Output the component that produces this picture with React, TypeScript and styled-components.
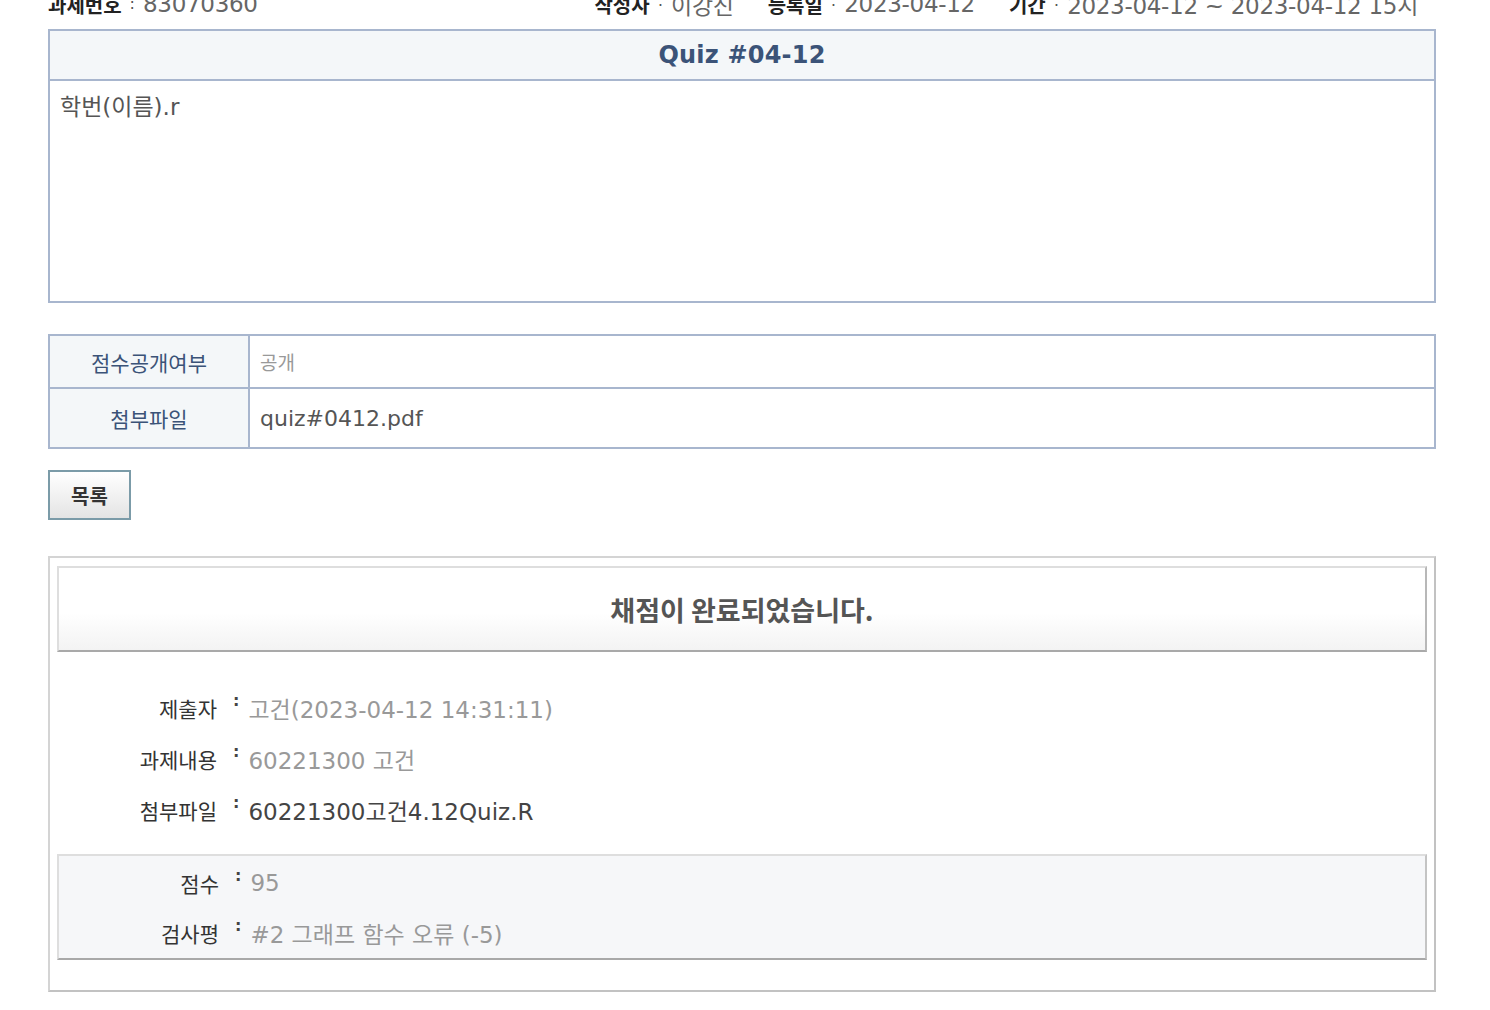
import React from "react";
import styled, { createGlobalStyle } from "styled-components";

const Global = createGlobalStyle`
  html, body { margin: 0; padding: 0; background: #ffffff; }
  body {
    font-family: "DejaVu Sans", "Noto Sans CJK KR", sans-serif;
    color: #333;
    overflow: hidden;
  }
`;

const Page = styled.div`
  width: 1388px;
  margin-left: 48px;
  display: flex;
  flex-direction: column;
`;

const InfoBar = styled.div`
  display: flex;
  justify-content: space-between;
  align-items: center;
  height: 32px;
  margin-top: -12px;
  margin-bottom: 9px;
  padding-right: 18px;
`;

const InfoGroup = styled.div`
  display: flex;
  gap: 34px;
`;

const InfoItem = styled.div`
  display: flex;
  align-items: center;
  white-space: nowrap;
`;

const InfoLabel = styled.span`
  font-family: "Noto Sans CJK KR", sans-serif;
  font-weight: 700;
  font-size: 20px;
  color: #222;
`;

const InfoValue = styled.span`
  font-size: 23px;
  color: #666;
  letter-spacing: -0.3px;
`;

const Colon = styled.span`
  display: inline-block;
  align-self: flex-start;
  font-size: 16px;
  line-height: 1;
  color: #555;
  margin: 6px 8px 0 8px;
`;

const QuizBox = styled.section`
  border: 2px solid #a8b6ce;
  display: flex;
  flex-direction: column;
`;

const QuizHeader = styled.h2`
  margin: 0;
  height: 48px;
  display: flex;
  align-items: center;
  justify-content: center;
  background: #f4f7f9;
  border-bottom: 2px solid #a8b6ce;
  font-size: 24px;
  font-weight: 700;
  color: #3b5378;
  letter-spacing: 0.2px;
`;

const QuizBody = styled.div`
  height: 220px;
  padding: 12px 10px 0;
  box-sizing: border-box;
  font-size: 23px;
  line-height: 28px;
  color: #555;
`;

const InfoTable = styled.div`
  margin-top: 31px;
  display: grid;
  grid-template-columns: 198px 1fr;
  grid-template-rows: 51px 58px;
  gap: 2px;
  padding: 2px;
  background: #a8b6ce;
`;

const HeadCell = styled.div`
  background: #f4f7f9;
  display: flex;
  align-items: center;
  justify-content: center;
  font-family: "Noto Sans CJK KR", sans-serif;
  font-size: 21px;
  color: #3b5378;
`;

const DataCell = styled.div<{ $muted?: boolean }>`
  background: #ffffff;
  display: flex;
  align-items: center;
  padding-left: 10px;
  font-size: ${(p) => (p.$muted ? "19px" : "22px")};
  color: ${(p) => (p.$muted ? "#999" : "#555")};
`;

const ButtonRow = styled.div`
  margin-top: 21px;
  display: flex;
`;

const ListButton = styled.button`
  width: 83px;
  height: 50px;
  border: 2px solid #7b9ba8;
  background: linear-gradient(#ffffff, #e4e4e4);
  font-family: "Noto Sans CJK KR", sans-serif;
  font-size: 20px;
  font-weight: 700;
  color: #333;
  padding: 0;
  cursor: pointer;
`;

const ResultBox = styled.section`
  margin-top: 36px;
  border: 2px solid #d4d4d4;
  border-right-color: #c2c2c2;
  border-bottom-color: #c2c2c2;
  padding: 8px 7px 30px 7px;
  display: flex;
  flex-direction: column;
`;

const ResultHeader = styled.h3`
  margin: 0;
  height: 82px;
  display: flex;
  align-items: center;
  justify-content: center;
  border: 2px solid #dedede;
  border-right-color: #b8b8b8;
  border-bottom-color: #a9a9a9;
  background: linear-gradient(#ffffff 55%, #f3f3f3);
  font-family: "Noto Sans CJK KR", sans-serif;
  font-size: 27px;
  font-weight: 700;
  color: #555;
`;

const Rows = styled.div`
  padding: 30px 0 19px;
  display: flex;
  flex-direction: column;
`;

const Row = styled.div<{ $h?: number }>`
  display: flex;
  align-items: center;
  height: ${(p) => p.$h ?? 51}px;
`;

const RowLabel = styled.div`
  width: 160px;
  text-align: right;
  font-family: "Noto Sans CJK KR", sans-serif;
  font-size: 21px;
  color: #333;
`;

const RowColon = styled(Colon)`
  align-self: center;
  font-weight: 700;
  color: #444;
  margin: -14px 9px 0 16px;
`;

const RowValue = styled.div<{ $dark?: boolean }>`
  font-size: 23px;
  color: ${(p) => (p.$dark ? "#444" : "#999")};
`;

const ScoreBox = styled.div`
  background: #f6f7f9;
  border: 2px solid #dedede;
  border-right-color: #c4c4c4;
  border-bottom-color: #a9a9a9;
  padding-top: 2px;
  display: flex;
  flex-direction: column;
`;

const info = [
  { label: "작성자", value: "이강진" },
  { label: "등록일", value: "2023-04-12" },
  { label: "기간", value: "2023-04-12 ~ 2023-04-12 15시" },
];

const submission = [
  { label: "제출자", value: "고건(2023-04-12 14:31:11)" },
  { label: "과제내용", value: "60221300 고건" },
  { label: "첨부파일", value: "60221300고건4.12Quiz.R", dark: true },
];

const grading = [
  { label: "점수", value: "95" },
  { label: "검사평", value: "#2 그래프 함수 오류 (-5)" },
];

export default function App() {
  return (
    <>
      <Global />
      <Page>
        <InfoBar>
          <InfoItem>
            <InfoLabel>과제번호</InfoLabel>
            <Colon>:</Colon>
            <InfoValue>83070360</InfoValue>
          </InfoItem>
          <InfoGroup>
            {info.map((i) => (
              <InfoItem key={i.label}>
                <InfoLabel>{i.label}</InfoLabel>
                <Colon>:</Colon>
                <InfoValue>{i.value}</InfoValue>
              </InfoItem>
            ))}
          </InfoGroup>
        </InfoBar>

        <QuizBox>
          <QuizHeader>Quiz #04-12</QuizHeader>
          <QuizBody>학번(이름).r</QuizBody>
        </QuizBox>

        <InfoTable>
          <HeadCell>점수공개여부</HeadCell>
          <DataCell $muted>공개</DataCell>
          <HeadCell>첨부파일</HeadCell>
          <DataCell>quiz#0412.pdf</DataCell>
        </InfoTable>

        <ButtonRow>
          <ListButton>목록</ListButton>
        </ButtonRow>

        <ResultBox>
          <ResultHeader>채점이 완료되었습니다.</ResultHeader>
          <Rows>
            {submission.map((r) => (
              <Row key={r.label}>
                <RowLabel>{r.label}</RowLabel>
                <RowColon>:</RowColon>
                <RowValue $dark={r.dark}>{r.value}</RowValue>
              </Row>
            ))}
          </Rows>
          <ScoreBox>
            {grading.map((r) => (
              <Row key={r.label} $h={50}>
                <RowLabel>{r.label}</RowLabel>
                <RowColon>:</RowColon>
                <RowValue>{r.value}</RowValue>
              </Row>
            ))}
          </ScoreBox>
        </ResultBox>
      </Page>
    </>
  );
}
